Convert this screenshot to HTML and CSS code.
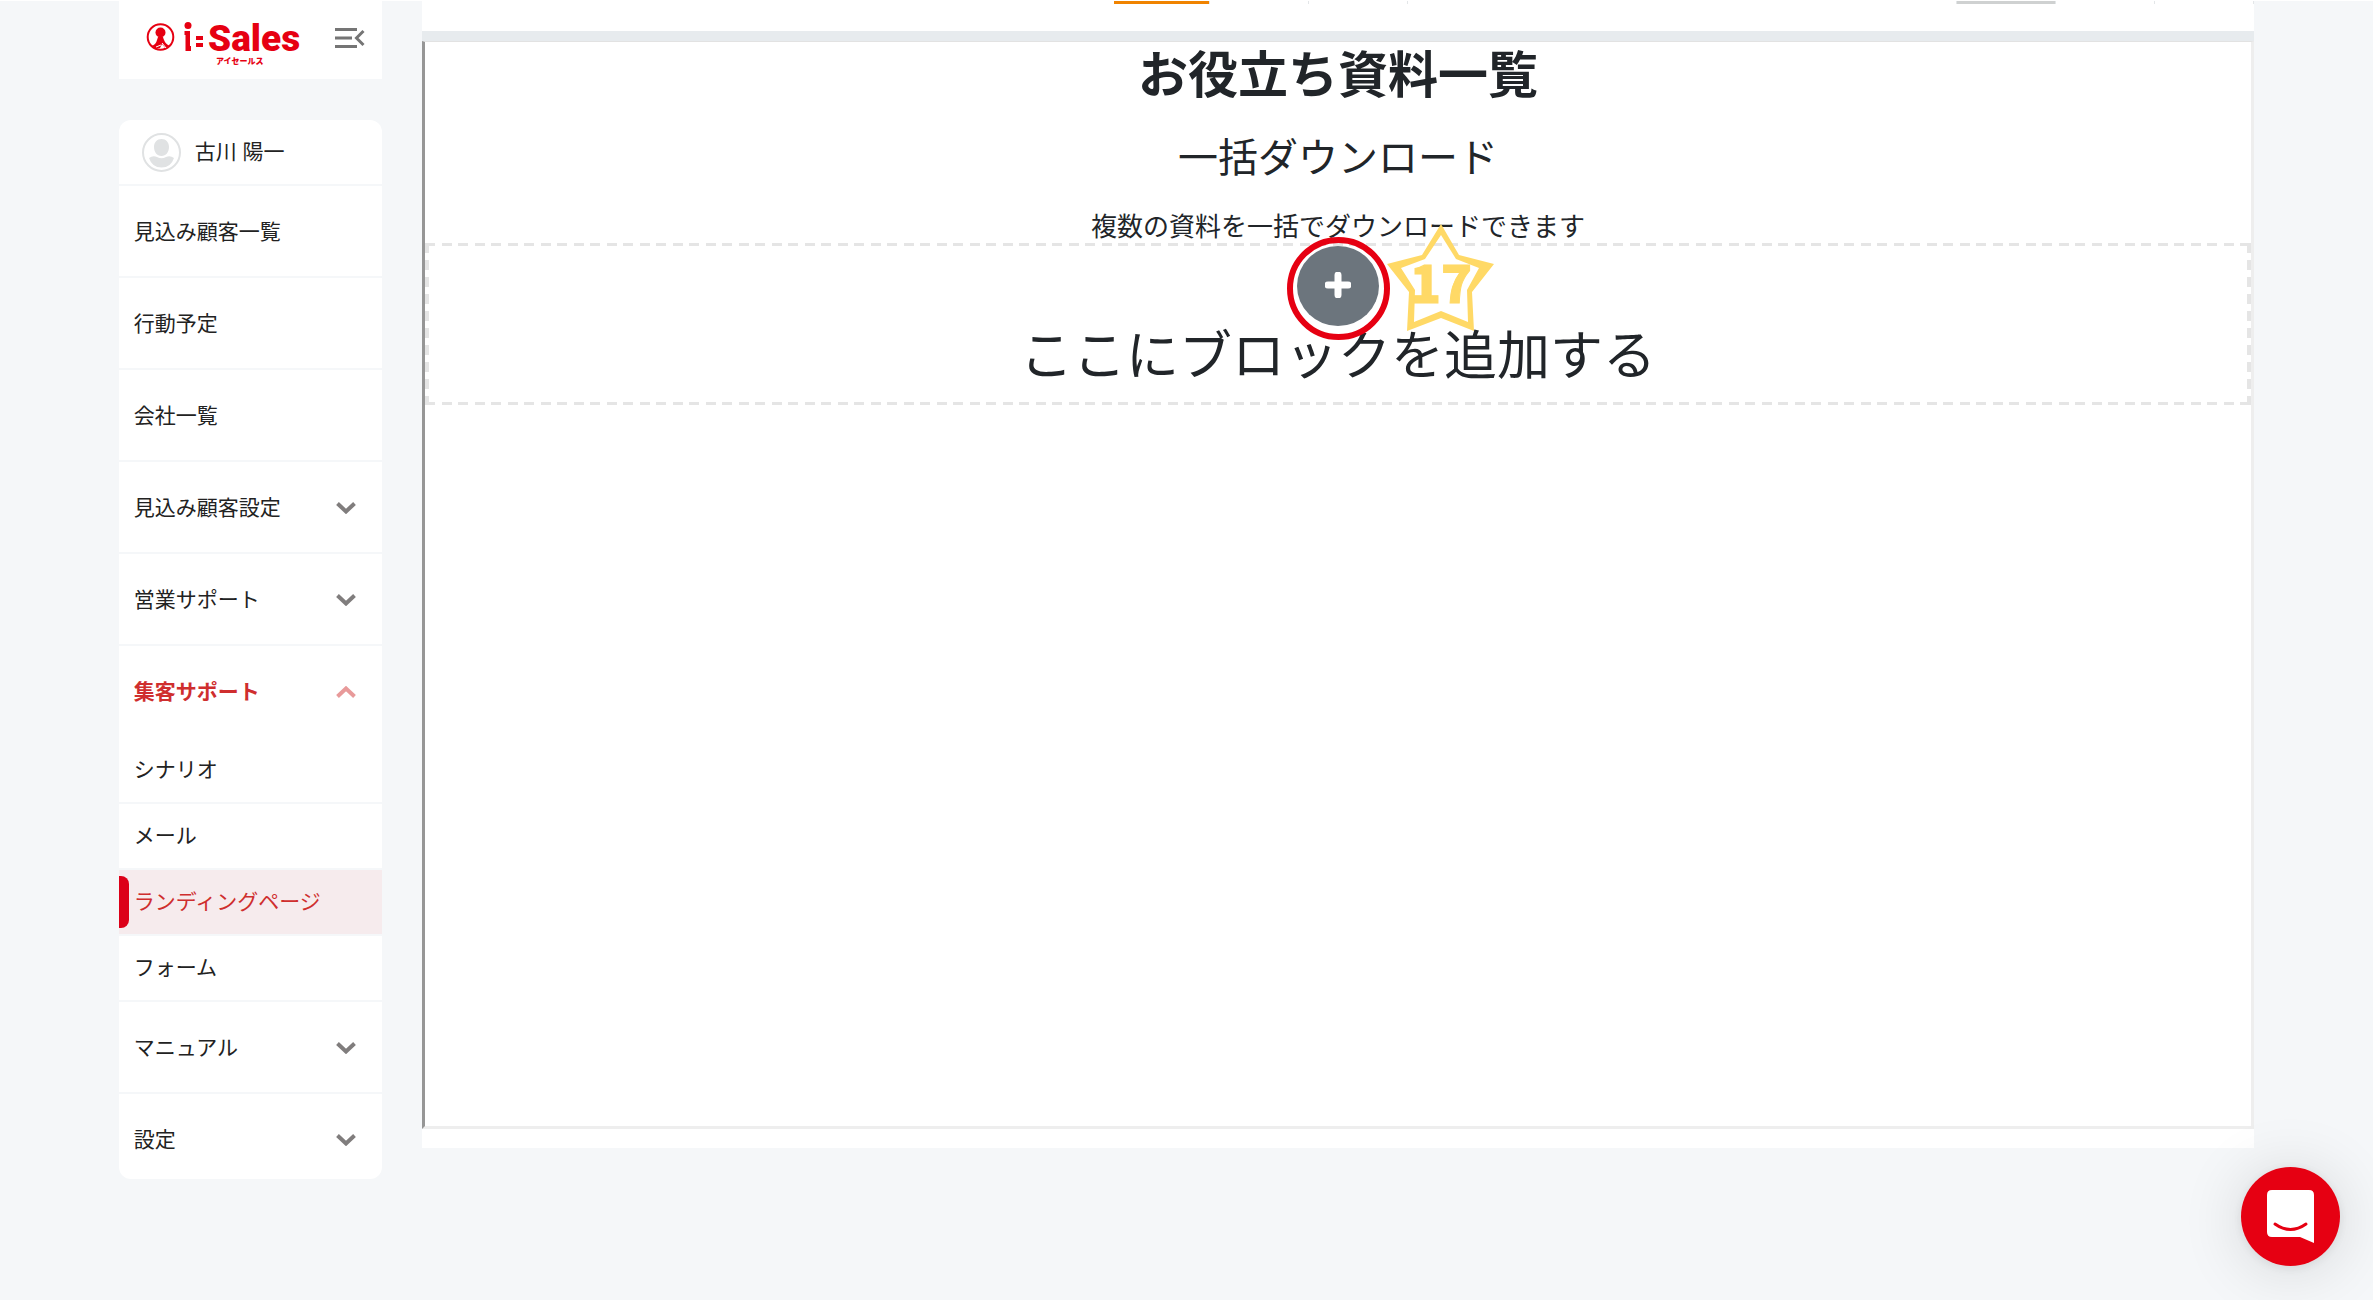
FILE: index.html
```html
<!DOCTYPE html>
<html lang="ja">

<head>
    <meta charset="UTF-8">
    <meta name="viewport" content="width=device-width, initial-scale=1.0">
    <title>i:Sales</title>
    <link rel="stylesheet" href="styles.css">
</head>

<body>
    <div class="layout">
        <aside class="sidebar">
            <header class="brand">
                <svg class="logo" width="154" height="50" viewBox="0 0 154 50" role="img" aria-label="i:Sales アイセールス">
                    <circle cx="14.500" cy="22" r="12.800" fill="none" stroke="#e60012" stroke-width="2" />
                    <circle cx="14.500" cy="17.500" r="5" fill="#e60012" />
                    <path d="M12 22 L17 22 Q18 27 22 30 L24 31 L20 34 L16 29 L14 33 L9 34 L5 31 Q10 30 11 25 Z" fill="#e60012" />
                    <path d="M16 28 L20 33 M15 30 L10 32" stroke="#fff" stroke-width="1" />
                    <circle cx="42" cy="10.500" r="3.500" fill="#e60012" />
                    <path d="M38.500 16 H44 V31 H45 V36 H39.500 V20 H38.500 Z" fill="#e60012" />
                    <path d="M50 21 H57 V25 H50 Z M50 28 H57 V32 H50 Z" fill="#e60012" />
                    <text class="logo-name" x="62" y="36">Sales</text>
                    <text class="logo-kana" x="70" y="49">アイセールス</text>
                </svg>
                <button class="menu-toggle" type="button" aria-label="メニュー">
                    <svg width="30" height="20" viewBox="0 0 30 20" fill="none" stroke="#757575" stroke-width="3">
                        <path d="M0 1.500 H22 M0 10 H17 M0 18.500 H22 M28.500 3 L21.500 10 L28.500 17" />
                    </svg>
                </button>
            </header>

            <nav class="menu">
                <div class="user">
                    <svg class="avatar" width="39" height="39" viewBox="0 0 39 39">
                        <circle cx="19.500" cy="19.500" r="18.500" fill="#fff" stroke="#e0e2e3" stroke-width="2" />
                        <path d="M19.500 6 C24 6 27 9.500 27 14 C27 19 24 23 19.500 23 C15 23 12 19 12 14 C12 9.500 15 6 19.500 6 Z M7 25 Q11 22 15 24 Q19.500 26.500 24 24 Q28 22 32 25 Q29 34.500 19.500 34.500 Q10 34.500 7 25 Z" fill="#e0e2e3" />
                    </svg>
                    <span>古川 陽一</span>
                </div>
                <a class="item" href="#">見込み顧客一覧</a>
                <a class="item" href="#">行動予定</a>
                <a class="item" href="#">会社一覧</a>
                <button class="item" type="button">見込み顧客設定
                    <svg class="chevron" width="20" height="12" viewBox="0 0 20 12"><path d="M1.500 1.500 L10 9.500 L18.500 1.500" /></svg>
                </button>
                <button class="item" type="button">営業サポート
                    <svg class="chevron" width="20" height="12" viewBox="0 0 20 12"><path d="M1.500 1.500 L10 9.500 L18.500 1.500" /></svg>
                </button>
                <button class="item open" type="button">集客サポート
                    <svg class="chevron" width="20" height="12" viewBox="0 0 20 12"><path d="M1.500 10.500 L10 2.500 L18.500 10.500" /></svg>
                </button>
                <div class="submenu">
                    <a class="subitem" href="#">シナリオ</a>
                    <a class="subitem" href="#">メール</a>
                    <a class="subitem active" href="#">ランディングページ</a>
                    <a class="subitem" href="#">フォーム</a>
                </div>
                <button class="item" type="button">マニュアル
                    <svg class="chevron" width="20" height="12" viewBox="0 0 20 12"><path d="M1.500 1.500 L10 9.500 L18.500 1.500" /></svg>
                </button>
                <button class="item last" type="button">設定
                    <svg class="chevron" width="20" height="12" viewBox="0 0 20 12"><path d="M1.500 1.500 L10 9.500 L18.500 1.500" /></svg>
                </button>
            </nav>
        </aside>

        <main class="content">
            <div class="tabs">
                <div class="tab-group steps">
                    <span class="tab current"></span>
                    <span class="tab"></span>
                    <span class="tab"></span>
                </div>
                <div class="tab-group">
                    <span class="tab"></span>
                    <span class="tab saved"></span>
                    <span class="tab"></span>
                    <span class="tab"></span>
                </div>
            </div>
            <section class="preview">
                <h1>お役立ち資料一覧</h1>
                <h2>一括ダウンロード</h2>
                <p class="lead">複数の資料を一括でダウンロードできます</p>
                <div class="drop-area">
                    <div class="add-wrap">
                        <button class="add" type="button" aria-label="追加">
                            <svg width="26" height="26" viewBox="0 0 26 26"><path d="M13 3 V23 M3 13 H23" /></svg>
                        </button>
                        <span class="ring"></span>
                        <svg class="star" width="108" height="108" viewBox="0 0 108 108">
                            <path fill="#ffd966" fill-rule="evenodd" d="M54 0 L72 31 L107 40 L85 68 L87 107 L54 94 L20 107 L22 68 L0 40 L35 31 Z M54 11 L38 35 L14 44 L28 66 L27 98 L54 87 L81 98 L80 66 L92 44 L69 35 Z" />
                            <text class="star-number" x="23" y="79">17</text>
                        </svg>
                    </div>
                    <p class="drop-text">ここにブロックを追加する</p>
                </div>
            </section>
        </main>
    </div>

    <button class="chat" type="button" aria-label="チャット">
        <svg width="47" height="53" viewBox="0 0 47 53">
            <path d="M5 0 H42 Q47 0 47 5 V53 L33 47 H5 Q0 47 0 42 V5 Q0 0 5 0 Z" fill="#fff" />
            <path d="M8 34 Q23.500 45 39 34" fill="none" stroke="#e60012" stroke-width="3" stroke-linecap="round" />
        </svg>
    </button>
</body>

</html>
```
FILE: styles.css
```css
* {
    box-sizing: border-box;
}

body {
    margin: 0;
    border-top: 1px solid #fff;
    background: #f5f7f9;
    color: #212529;
    font-family: "Liberation Sans", "Noto Sans CJK JP", sans-serif;
}

h1,
h2,
p {
    margin: 0;
    text-align: center;
}

button {
    padding: 0;
    border: none;
    background: none;
    color: inherit;
    font: inherit;
    cursor: pointer;
}

.layout {
    display: flex;
    align-items: flex-start;
    gap: 40px;
    padding: 0 5%;
}

/* sidebar */
.sidebar {
    flex: 0 0 263px;
}

.brand {
    display: flex;
    align-items: center;
    justify-content: space-between;
    height: 78px;
    margin-bottom: 41px;
    padding: 0 17px 0 27px;
    background: #fff;
}

.menu-toggle,
.logo,
.avatar,
.star {
    display: block;
}

.logo {
    overflow: visible;
}

.logo-name {
    fill: #e60012;
    font-family: Roboto, sans-serif;
    font-size: 37px;
    font-weight: 900;
}

.logo-kana {
    fill: #e60012;
    font-family: "Noto Sans CJK JP", sans-serif;
    font-size: 8px;
    font-weight: 900;
}

.menu {
    overflow: hidden;
    border-radius: 12px;
    background: #fff;
    color: #222;
    font-size: 21px;
    line-height: 32px;
}

.user {
    display: flex;
    align-items: center;
    gap: 14px;
    height: 66px;
    padding: 0 23px;
    border-bottom: 2px solid #f5f7f9;
}

.item,
.subitem {
    display: flex;
    align-items: center;
    justify-content: space-between;
    width: 100%;
    padding: 30px 26px 28px 15px;
    border-bottom: 2px solid #f5f7f9;
    color: inherit;
    text-decoration: none;
}

.subitem {
    padding: 16px 15px;
}

.item.open {
    border-bottom-color: #fff;
    color: #cf2e2e;
    font-weight: 700;
}

.item.last {
    padding-bottom: 23px;
    border-bottom: none;
}

.subitem.active {
    position: relative;
    background: #f6ebed;
    color: #cf2e2e;
}

.subitem.active::before {
    content: "";
    position: absolute;
    top: 6px;
    bottom: 6px;
    left: 0;
    width: 10px;
    border-radius: 0 8px 8px 0;
    background: #dc0018;
}

.chevron {
    fill: none;
    stroke: #807d7d;
    stroke-width: 4;
}

.open .chevron {
    stroke: #e89a9a;
}

/* content */
.content {
    flex: 1;
    min-width: 0;
    padding-bottom: 19px;
    background: #fff;
}

.tabs {
    display: flex;
    justify-content: flex-end;
    height: 40px;
    border-bottom: 10px solid #e7ebee;
}

.tab-group {
    display: flex;
}

.steps {
    margin-right: 450px;
}

.tab {
    width: 99px;
    height: 3px;
    border-right: 1px solid #e3e6e8;
}

.tab.current {
    border-left: 3px solid #fff;
    background: #f08300;
}

.tab.saved {
    background: #cfd1d1;
}

.preview {
    min-height: 1088px;
    border: 3px solid #eee;
    border-top: 1px solid #e2e2e2;
    border-left-color: #969696;
}

h1 {
    margin-bottom: 26px;
    font-size: 50px;
    line-height: 68px;
}

h2 {
    margin-bottom: 32px;
    font-size: 40px;
    font-weight: 400;
    line-height: 44px;
}

.lead {
    font-size: 26px;
    line-height: 31px;
}

/* dashed frame drawn along the four edges */
.drop-area {
    padding: 3px 4px 17px;
    background:
        repeating-linear-gradient(90deg, #e5e5e5 0 10px, transparent 10px 17px, #e5e5e5 17px 27px, transparent 27px 33px) top / 100% 3px no-repeat,
        repeating-linear-gradient(90deg, #e5e5e5 0 10px, transparent 10px 17px, #e5e5e5 17px 27px, transparent 27px 33px) bottom / 100% 3px no-repeat,
        repeating-linear-gradient(#e5e5e5 0 10px, transparent 10px 17px) left / 4px 100% no-repeat,
        repeating-linear-gradient(#e5e5e5 0 10px, transparent 10px 17px) right / 4px 100% no-repeat;
}

.add-wrap {
    position: relative;
    width: 82px;
    height: 80px;
    margin: 0 auto;
}

.add {
    display: flex;
    align-items: center;
    justify-content: center;
    width: 100%;
    height: 100%;
    padding-bottom: 3px;
    border-radius: 50%;
    background: #6c757d;
}

.add svg {
    fill: none;
    stroke: #fff;
    stroke-width: 7;
    stroke-linecap: round;
}

.ring {
    position: absolute;
    top: -9px;
    left: -10px;
    width: 103px;
    height: 103px;
    border: 6px solid #e60012;
    border-radius: 50%;
    pointer-events: none;
}

.star {
    position: absolute;
    top: -22px;
    left: 90px;
}

.star-number {
    fill: #ffd966;
    stroke: #ffd966;
    stroke-width: 1;
    font-family: "Noto Sans CJK JP", sans-serif;
    font-size: 51px;
    font-weight: 900;
}

.drop-text {
    font-size: 53px;
    line-height: 62px;
}

/* chat launcher */
.chat {
    position: fixed;
    right: 33px;
    bottom: 34px;
    display: flex;
    align-items: center;
    justify-content: center;
    width: 99px;
    height: 99px;
    border-radius: 50%;
    background: #e60012;
    box-shadow: 0 2px 12px rgba(0, 0, 0, 0.08), 0 4px 64px rgba(0, 0, 0, 0.14);
}
```
